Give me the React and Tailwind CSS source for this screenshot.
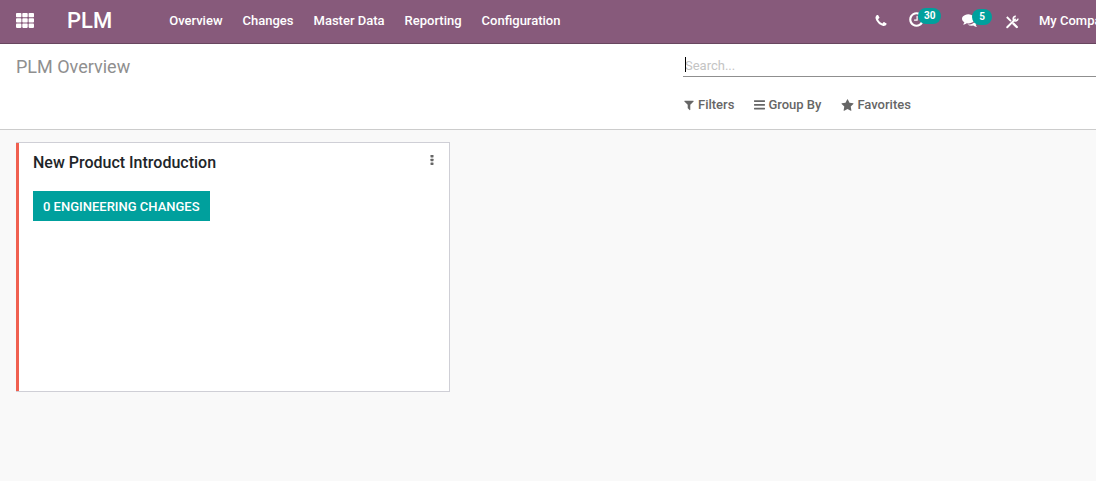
const PATHS = {
  phone: "M1600 1240q0 27-10 70.5t-21 68.5q-21 50-122 106-94 51-186 51-27 0-53-3.5t-57.5-12.5-47-14.5-55.5-20.5-49-18q-98-35-175-83-127-79-264-216t-216-264q-48-77-83-175-3-9-18-49t-20.5-55.5-14.5-47-12.5-57.5-3.5-53q0-92 51-186 56-101 106-122 25-11 68.5-21t70.5-10q14 0 21 3 18 6 53 76 11 19 30 54t35 63.5 31 53.5q3 4 17.5 25t21.5 35.5 7 28.5q0 20-28.5 50t-62 55-62 53-28.5 46q0 9 5 22.5t8.5 20.5 14 24 11.5 19q76 137 174 235t235 174q2 1 19 11.5t24 14 20.5 8.5 22.5 5q18 0 46-28.5t53-62 55-62 50-28.5q14 0 28.5 7t35.5 21.5 25 17.5q25 15 53.5 31t63.5 35 54 30q70 35 76 53 3 7 3 21z",
  clock: "M1024 544v448q0 14-9 23t-23 9h-320q-14 0-23-9t-9-23v-64q0-14 9-23t23-9h224v-352q0-14 9-23t23-9h64q14 0 23 9t9 23zm416 352q0-148-73-273t-198-198-273-73-273 73-198 198-73 273 73 273 198 198 273 73 273-73 198-198 73-273zm224 0q0 209-103 385.5t-279.5 279.5-385.5 103-385.5-103-279.5-279.5-103-385.5 103-385.5 279.5-279.5 385.5-103 385.5 103 279.5 279.5 103 385.5z",
  comments: "M1408 768q0 139-94 257t-256.5 186.5-353.5 68.5q-86 0-176-16-124 88-278 128-36 9-86 16h-3q-11 0-20.5-8t-11.5-21q-1-3-1-6.5t.5-6.5 2-6l2.5-5 3.5-5.5 4-5 4.5-5 4-4.5q5-6 23-25t26-29.5 22.5-29 25-38.5 20.5-44q-124-72-195-177t-71-224q0-139 94-257t256.5-186.5 353.5-68.5 353.5 68.5 256.5 186.5 94 257zm384 256q0 120-71 224.5t-195 176.5q10 24 20.5 44t25 38.5 22.5 29 26 29.5 23 25q1 1 4 4.5t4.5 5 4 5 3.5 5.5l2.5 5 2 6 .5 6.5-1 6.5q-3 14-13 22t-22 7q-50-7-86-16-154-40-278-128-90 16-176 16-271 0-472-132 58 4 88 4 161 0 309-45t264-129q125-92 192-212t67-254q0-77-23-152 129 71 204 178t75 230z",
  filter: "M1595 295q17 41-14 70l-493 493v742q0 42-39 59-13 5-25 5-27 0-45-19l-256-256q-19-19-19-45v-486l-493-493q-31-29-14-70 17-39 59-39h1280q42 0 59 39z",
  star: "M1728 647q0 22-26 48l-363 354 86 500q1 7 1 20 0 21-10.5 35.5t-30.5 14.5q-19 0-40-12l-449-236-449 236q-22 12-40 12-21 0-31.5-14.5t-10.5-35.5q0-6 2-20l86-500-364-354q-25-27-25-48 0-37 56-46l502-73 225-455q19-41 49-41t49 41l225 455 502 73q56 9 56 46z",
};

function Glyph({ name, className }) {
  return (
    <svg viewBox="0 0 1792 1792" fill="currentColor" aria-hidden="true" className={className}>
      <path d={PATHS[name]} />
    </svg>
  );
}

function AppsIcon() {
  return (
    <svg viewBox="0 0 18 15" fill="currentColor" aria-hidden="true" className="h-[15px] w-[18px]">
      {[0, 5.3, 10.6].map((y) =>
        [0, 6.3, 12.6].map((x) => <rect key={`${x}-${y}`} x={x} y={y} width="5.4" height="4.3" rx="0.8" />)
      )}
    </svg>
  );
}

function LinesIcon() {
  return (
    <svg viewBox="0 0 11 12" fill="currentColor" aria-hidden="true" className="h-3 w-[11px]">
      <rect y="1.2" width="11" height="1.7" rx="0.4" />
      <rect y="5" width="11" height="1.7" rx="0.4" />
      <rect y="8.8" width="11" height="1.7" rx="0.4" />
    </svg>
  );
}

function ToolsIcon() {
  return (
    <svg viewBox="0 0 14 14" fill="none" stroke="currentColor" aria-hidden="true" className="h-[14px] w-[14px]">
      <path d="M1.8 2 6 6.2" strokeWidth="1.8" />
      <path d="M8.4 8.6 11.8 12" strokeWidth="2.4" strokeLinecap="round" />
      <path d="M2.2 12.2 10 4.4" strokeWidth="2" strokeLinecap="round" />
      <path d="M10.8 1.4A2.3 2.3 0 1 0 12.8 3.6" strokeWidth="1.6" />
    </svg>
  );
}

const MENU = ["Overview", "Changes", "Master Data", "Reporting", "Configuration"];

function Badge({ children }) {
  return (
    <span className="absolute -top-[3px] left-[10px] min-w-5 rounded-full bg-[#00a09d] px-[6px] text-center text-[10px] leading-4 font-bold">
      {children}
    </span>
  );
}

function Navbar() {
  return (
    <header className="flex h-11 items-center overflow-hidden border-b border-[#68465f] bg-[#875a7b] pb-[2px] pl-4 text-[13px] font-medium whitespace-nowrap text-white">
      <button type="button" aria-label="Applications" className="shrink-0">
        <AppsIcon />
      </button>
      <a href="#plm" className="ml-[33px] text-[22px] leading-[40px] font-medium">PLM</a>
      <nav className="ml-[57px] flex gap-5">
        {MENU.map((item) => (
          <a key={item} href="#menu">{item}</a>
        ))}
      </nav>
      <div className="-mr-20 ml-auto flex shrink-0 items-center">
        <button type="button" aria-label="Phone" className="mr-5">
          <Glyph name="phone" className="h-[14px] w-[14px]" />
        </button>
        <button type="button" aria-label="Activities" className="relative mr-[37px] pb-[2px]">
          <Glyph name="clock" className="h-[17px] w-[17px]" />
          <Badge>30</Badge>
        </button>
        <button type="button" aria-label="Messages" className="relative mr-[27px] pb-[2px]">
          <Glyph name="comments" className="h-4 w-4" />
          <Badge>5</Badge>
        </button>
        <button type="button" aria-label="Developer tools" className="mr-5 pt-[2px]">
          <ToolsIcon />
        </button>
        <button type="button" className="w-[137px] text-left">My Company</button>
      </div>
    </header>
  );
}

function ControlPanel() {
  return (
    <section className="flex h-[86px] border-b border-[#cccccc] bg-white pl-4">
      <h1 className="flex-1 pt-[9px] text-[18px] leading-7 text-[#8f8f8f]">PLM Overview</h1>
      <div className="w-[413px]">
        <div className="relative border-b border-[#8f8f8f] pt-[10px]">
          <span aria-hidden="true" className="absolute top-[13px] left-[2px] h-[15px] w-px bg-black" />
          <input
            type="text"
            aria-label="Search"
            placeholder="Search..."
            className="block h-[22px] w-full bg-transparent px-[2px] text-[13px] text-[#4c4c4c] outline-none placeholder:text-[#c4c4c4]"
          />
        </div>
        <div className="mt-[18px] flex gap-5 text-[13px] leading-5 font-medium text-[#666666]">
          <button type="button" className="flex items-center gap-[3px]">
            <Glyph name="filter" className="h-3 w-3" />Filters
          </button>
          <button type="button" className="flex items-center gap-[3px]">
            <LinesIcon />Group By
          </button>
          <button type="button" className="flex items-center gap-[3px]">
            <Glyph name="star" className="h-[13px] w-[13px]" />Favorites
          </button>
        </div>
      </div>
    </section>
  );
}

function StageCard() {
  return (
    <article className="flex h-[250px] w-[434px] max-w-full border border-l-0 border-[#cfcfd6] bg-white">
      <div className="w-[3px] bg-[#f06050]" />
      <div className="flex-1 pt-2 pr-[14px] pl-[14px]">
        <div className="flex items-start justify-between">
          <h2 className="text-[16px] leading-6 font-medium text-[#212529]">New Product Introduction</h2>
          <button type="button" aria-label="Card menu" className="mt-1 text-[#666666]">
            <svg viewBox="0 0 6 10" fill="currentColor" aria-hidden="true" className="h-[10px] w-[6px]">
              <rect x="1.5" width="3" height="2.4" rx="0.4" />
              <rect x="1.5" y="3.8" width="3" height="2.4" rx="0.4" />
              <rect x="1.5" y="7.6" width="3" height="2.4" rx="0.4" />
            </svg>
          </button>
        </div>
        <button type="button" className="mt-4 h-[30px] bg-[#00a09d] px-[10px] pt-[2px] text-[13px] font-medium text-white">
          0 ENGINEERING CHANGES
        </button>
      </div>
    </article>
  );
}

export default function App() {
  return (
    <div className="flex min-h-screen flex-col bg-[#f9f9f9] font-[Roboto,sans-serif]">
      <Navbar />
      <ControlPanel />
      <main className="px-4 py-3">
        <StageCard />
      </main>
    </div>
  );
}
